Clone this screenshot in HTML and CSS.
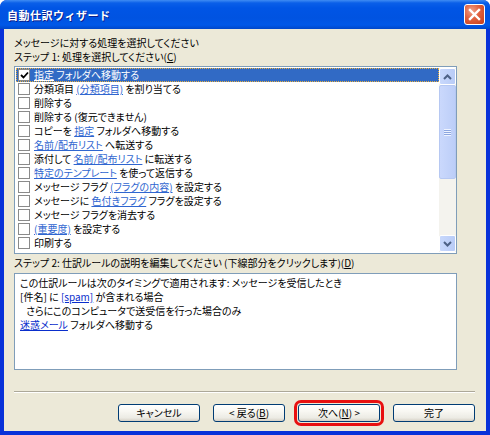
FILE: index.html
```html
<!DOCTYPE html>
<html lang="ja">
<head>
<meta charset="utf-8">
<link rel="stylesheet" href="styles.css">
</head>
<body>
<div class="window">
  <div class="titlebar">
    <span class="title">自動仕訳ウィザード</span>
    <span class="close"><svg width="13" height="13" viewBox="0 0 13 13"><path d="M2 2 L11 11 M11 2 L2 11" stroke="#fff" stroke-width="2.4" stroke-linecap="square"/></svg></span>
  </div>
  <div class="client">
    <div class="label">メッセージに対する処理を選択してください</div>
    <div class="label">ステップ 1: 処理を選択してください(<u>C</u>)</div>
    <div class="listbox">
      <div class="rows">
        <div class="row selected"><span class="cb checked"><svg width="9" height="9" viewBox="0 0 9 9"><path d="M1 4 L3.5 6.5 L8 1.5" stroke="#000" stroke-width="1.8" fill="none"/></svg></span><span class="rt"><span class="lk">指定</span> フォルダへ移動する</span></div>
        <div class="row"><span class="cb"></span><span class="rt">分類項目 <span class="lk">(分類項目)</span> を割り当てる</span></div>
        <div class="row"><span class="cb"></span><span class="rt">削除する</span></div>
        <div class="row"><span class="cb"></span><span class="rt">削除する (復元できません)</span></div>
        <div class="row"><span class="cb"></span><span class="rt">コピーを <span class="lk">指定</span> フォルダへ移動する</span></div>
        <div class="row"><span class="cb"></span><span class="rt"><span class="lk">名前/配布リスト</span> へ転送する</span></div>
        <div class="row"><span class="cb"></span><span class="rt">添付して <span class="lk">名前/配布リスト</span> に転送する</span></div>
        <div class="row"><span class="cb"></span><span class="rt"><span class="lk">特定のテンプレート</span> を使って返信する</span></div>
        <div class="row"><span class="cb"></span><span class="rt">メッセージ フラグ <span class="lk">(フラグの内容)</span> を設定する</span></div>
        <div class="row"><span class="cb"></span><span class="rt">メッセージに <span class="lk">色付きフラグ</span> フラグを設定する</span></div>
        <div class="row"><span class="cb"></span><span class="rt">メッセージ フラグを消去する</span></div>
        <div class="row"><span class="cb"></span><span class="rt"><span class="lk">(重要度)</span> を設定する</span></div>
        <div class="row"><span class="cb"></span><span class="rt">印刷する</span></div>
      </div>
      <div class="vscroll">
        <div class="sbtn"><svg width="9" height="6" viewBox="0 0 9 6"><path d="M1 5 L4.5 1.5 L8 5" stroke="#4D6185" stroke-width="2" fill="none"/></svg></div>
        <div class="thumb"><span class="grip"></span></div>
        <div class="track"></div>
        <div class="sbtn"><svg width="9" height="6" viewBox="0 0 9 6"><path d="M1 1 L4.5 4.5 L8 1" stroke="#4D6185" stroke-width="2" fill="none"/></svg></div>
      </div>
    </div>
    <div class="label step2">ステップ 2: 仕訳ルールの説明を編集してください (下線部分をクリックします)(<u>D</u>)</div>
    <div class="desc">
      <div>この仕訳ルールは次のタイミングで適用されます: メッセージを受信したとき</div>
      <div>[件名] に <span class="dl">[spam]</span> が含まれる場合</div>
      <div class="indent">さらにこのコンピュータで送受信を行った場合のみ</div>
      <div><span class="dl">迷惑メール</span> フォルダへ移動する</div>
    </div>
    <div class="sep"></div>
    <div class="buttons">
      <button class="btn w82">キャンセル</button>
      <button class="btn w72">&lt; 戻る(<u>B</u>)</button>
      <button class="btn w82 marked">次へ(<u>N</u>) &gt;</button>
      <button class="btn w82">完了</button>
    </div>
  </div>
</div>
</body>
</html>
```
FILE: styles.css
```css
* { box-sizing: border-box; }
html, body { margin: 0; padding: 0; background: #fff; }
body {
  font-family: "Noto Sans CJK JP", "Noto Sans", sans-serif;
  font-size: 10px;
  font-feature-settings: "palt";
  color: #000;
}
.window {
  width: 490px;
  height: 435px;
  display: flex;
  flex-direction: column;
  background: #0831D9;
  border-radius: 7px 7px 0 0;
  overflow: hidden;
}
.titlebar {
  height: 29px;
  flex: none;
  display: flex;
  align-items: center;
  justify-content: space-between;
  padding: 0 5px 0 7px;
  background: linear-gradient(#3F8CF3 0px, #0A5FE8 3px, #0055E5 8px, #0053E1 18px, #0058E8 25px, #0047C9 29px);
}
.title {
  color: #fff;
  font-weight: bold;
  font-size: 11px;
  font-feature-settings: normal;
  letter-spacing: 0.5px;
  text-shadow: 1px 1px 0 #0A1E8C;
}
.close {
  width: 21px;
  height: 21px;
  border: 1px solid #fff;
  border-radius: 3px;
  background: radial-gradient(circle at 35% 30%, #F0A088 0%, #E0603E 45%, #C63D17 100%);
  display: flex;
  align-items: center;
  justify-content: center;
}
.client {
  flex: 1;
  margin: 0 4px 4px 4px;
  background: #ECE9D8;
  padding: 7px 11px 0 10px;
  display: flex;
  flex-direction: column;
}
.label {
  height: 14px;
  line-height: 14px;
  white-space: nowrap;
}
u { text-decoration: underline; }
.listbox {
  margin-top: 2px;
  width: 443px;
  height: 188px;
  border: 1px solid #7F9DB9;
  background: #fff;
  display: flex;
  padding: 1px 0 1px 1px;
}
.rows { flex: 1; }
.row {
  height: 14px;
  display: flex;
  align-items: center;
  white-space: nowrap;
}
.row.selected {
  background: #316AC5;
  color: #fff;
  outline: 1px dotted #E8B040;
  outline-offset: -1px;
}
.cb {
  width: 12px;
  height: 12px;
  margin-left: 2px;
  margin-right: 4px;
  border: 1px solid #8A8A8A;
  background: #fff;
  display: flex;
  align-items: center;
  justify-content: center;
  flex: none;
}
.rt { line-height: 14px; }
.lk {
  color: #2F66D0;
  text-decoration: underline;
}
.selected .lk { color: #fff; }
.vscroll {
  width: 17px;
  flex: none;
  display: flex;
  flex-direction: column;
  background: #F4F3EE;
}
.sbtn {
  height: 17px;
  flex: none;
  border: 1px solid #fff;
  border-radius: 2px;
  background: linear-gradient(90deg, #C8D8FC, #B9CCF7);
  display: flex;
  align-items: center;
  justify-content: center;
}
.thumb {
  height: 94px;
  flex: none;
  border: 1px solid #B6C8F2;
  border-radius: 2px;
  background: linear-gradient(90deg, #CAD8FC, #BCCEF8);
  display: flex;
  align-items: center;
  justify-content: center;
}
.grip {
  width: 7px;
  height: 7px;
  background: repeating-linear-gradient(#EEF3FF 0 1px, #8CA6E0 1px 2px);
}
.track { flex: 1; }
.step2 { margin-top: 2px; }
.desc {
  margin-top: 3px;
  width: 443px;
  height: 97px;
  border: 1px solid #7F9DB9;
  background: #fff;
  padding: 2px 0 0 5px;
  line-height: 14px;
  white-space: nowrap;
}
.indent { padding-left: 6px; }
.dl {
  color: #0A2ECC;
  text-decoration: underline;
}
.sep {
  margin-top: 21px;
  height: 2px;
  border-top: 1px solid #ACA899;
  border-bottom: 1px solid #fff;
  width: 461px;
}
.buttons {
  margin-top: 11px;
  display: flex;
  justify-content: flex-end;
  gap: 13px;
  width: 461px;
}
.btn {
  height: 18px;
  padding: 0;
  font-family: inherit;
  font-size: 10px;
  font-feature-settings: "palt";
  line-height: 16px;
  color: #000;
  border: 1px solid #003C74;
  border-radius: 3px;
  background: linear-gradient(#FFFFFF 0%, #F8F7F2 40%, #ECEBE4 80%, #D6D0C5 100%);
}
.w82 { width: 82px; }
.w72 { width: 72px; }
.marked {
  outline: 3px solid #E81010;
  outline-offset: 1px;
}
```
